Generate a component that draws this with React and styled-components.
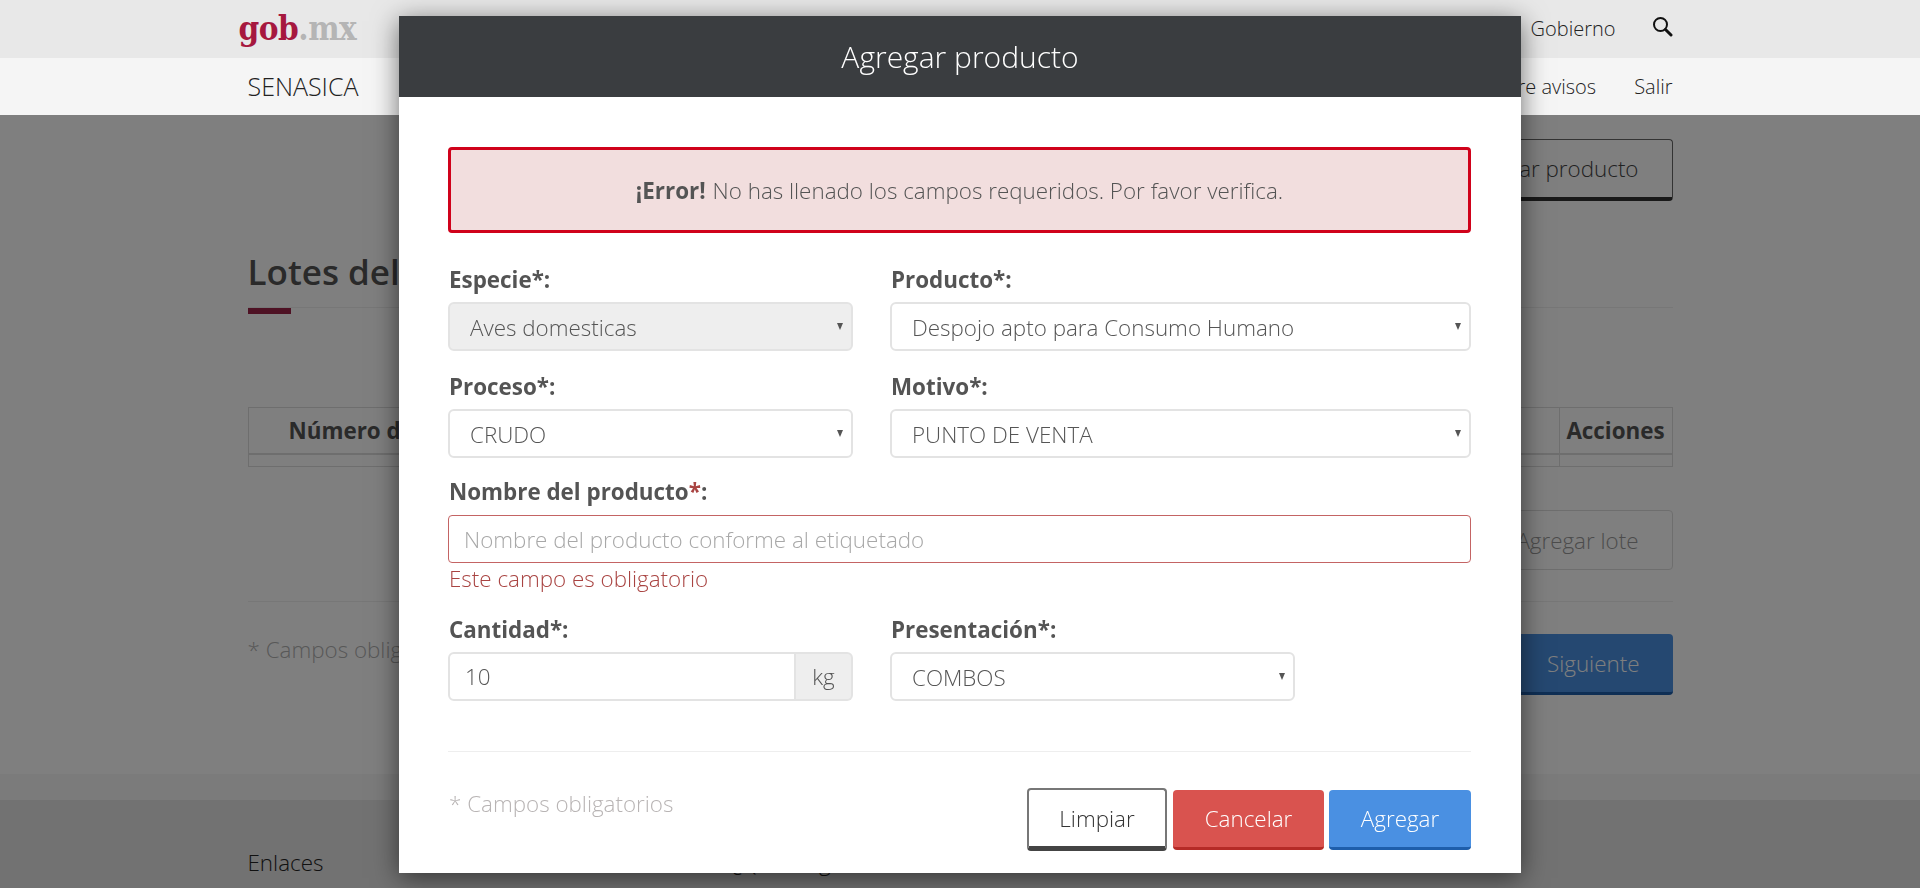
import React from 'react';
import styled, { createGlobalStyle } from 'styled-components';

const GlobalStyle = createGlobalStyle`
  html, body {
    margin: 0;
    height: 100%;
    overflow: hidden;
    background: #fff;
  }
  body {
    font-family: "Open Sans", "Noto Sans", sans-serif;
    font-weight: 300;
    color: #545454;
  }
  * {
    box-sizing: border-box;
  }
`;

const Wrap = styled.div`
  width: 1425px;
  margin: 0 auto;
`;

const TopBar = styled.div`
  position: relative;
  z-index: 20;
  height: 58px;
  background: #e8e8e8;
`;

const TopInner = styled(Wrap)`
  height: 100%;
  padding-bottom: 2px;
  display: flex;
  align-items: center;
  justify-content: space-between;
`;

const Logo = styled.div`
  margin-left: -9px;
  font-family: "DejaVu Serif Condensed", "DejaVu Serif", serif;
  font-weight: 700;
  font-size: 33px;
  letter-spacing: -0.5px;
  color: #a6183f;
  span {
    color: #b5b5b5;
  }
`;

const TopRight = styled.div`
  display: flex;
  align-items: center;
  gap: 36px;
  font-size: 20px;
  color: #222;
  svg {
    margin-top: -4px;
  }
`;

const NavBar = styled.div`
  position: relative;
  z-index: 20;
  height: 57px;
  background: #f5f5f5;
`;

const NavInner = styled(Wrap)`
  height: 100%;
  display: flex;
  align-items: center;
  justify-content: space-between;
  color: #222;
`;

const Brand = styled.div`
  margin-top: -2px;
  font-size: 25px;
`;

const NavLinks = styled.div`
  display: flex;
  gap: 38px;
  font-size: 20px;
`;

const Content = styled(Wrap)`
  height: 659px;
  padding-top: 24px;
`;

const PageActions = styled.div`
  display: flex;
  justify-content: flex-end;
`;

const OutlineButton = styled.button`
  height: 62px;
  padding: 0 33px;
  border: 1px solid #666;
  border-bottom: 4px solid #333;
  border-radius: 4px;
  background: #fff;
  font: inherit;
  font-size: 22.4px;
  color: #444;
`;

const SectionTitle = styled.h2`
  margin: 49px 0 0;
  height: 58px;
  border-bottom: 1px solid #eee;
  font-size: 35px;
  font-weight: 600;
  color: #545454;
  line-height: 44px;
`;

const TitleBar = styled.div`
  width: 43px;
  height: 6px;
  background: #9d2449;
`;

const Table = styled.table`
  width: 100%;
  margin-top: 93px;
  border-collapse: collapse;
  table-layout: fixed;
  th {
    height: 46px;
    border: 1px solid #ddd;
    border-bottom-width: 2px;
    font-size: 22.4px;
    font-weight: 700;
    color: #545454;
    text-align: left;
    padding: 0 0 0 40px;
  }
  th:last-child {
    width: 113px;
    padding: 0;
    text-align: center;
  }
  td {
    height: 13px;
    padding: 0;
    border: 1px solid #ddd;
  }
`;

const AddRow = styled.div`
  display: flex;
  justify-content: flex-end;
  margin-top: 43px;
`;

const GhostButton = styled.button`
  height: 60px;
  padding: 0 33px;
  border: 1px solid #ddd;
  border-radius: 4px;
  background: #fff;
  font: inherit;
  font-size: 22.4px;
  color: #999;
`;

const PageRule = styled.div`
  height: 1px;
  margin-top: 31px;
  background: #eee;
`;

const PageFoot = styled.div`
  display: flex;
  align-items: flex-start;
  justify-content: space-between;
  margin-top: 32px;
`;

const PageNote = styled.div`
  padding-top: 1px;
  font-size: 22.4px;
  line-height: 30px;
  color: #b0b0b0;
`;

const NextButton = styled.button`
  height: 61px;
  padding: 0 33px;
  border: 0;
  border-bottom: 3px solid #1e5eab;
  border-radius: 4px;
  background: #4a90e2;
  font: inherit;
  font-size: 22.4px;
  color: #fff;
`;

const PreFooter = styled.div`
  height: 26px;
  background: #f6f6f6;
`;

const Footer = styled.div`
  height: 88px;
  background: #e4e4e4;
`;

const FooterInner = styled(Wrap)`
  display: grid;
  grid-template-columns: 485px 1fr;
  padding-top: 48px;
  font-size: 22.4px;
  line-height: 30px;
  color: #222;
`;

const Backdrop = styled.div`
  position: fixed;
  inset: 0;
  z-index: 10;
  background: rgba(0, 0, 0, 0.5);
`;

const Modal = styled.div`
  position: fixed;
  z-index: 30;
  top: 16px;
  left: 399px;
  width: 1122px;
  height: 857px;
  background: #fff;
  box-shadow: 0 5px 25px rgba(0, 0, 0, 0.55);
`;

const ModalHeader = styled.div`
  height: 81px;
  display: flex;
  align-items: center;
  justify-content: center;
  background: #3a3d40;
  color: #fff;
  font-size: 30px;
`;

const ModalBody = styled.div`
  padding: 50px 50px 0 49px;
`;

const Alert = styled.div`
  height: 86px;
  display: flex;
  align-items: center;
  justify-content: center;
  gap: 7px;
  margin-bottom: 34px;
  border: 3px solid #d0021b;
  border-radius: 4px;
  background: #f2dede;
  font-size: 22.4px;
  color: #545454;
  strong {
    font-weight: 700;
  }
`;

const Row = styled.div`
  display: grid;
  grid-template-columns: 405px 1fr;
  column-gap: 37px;
  margin-top: ${({ $top }) => $top || 0}px;
  margin-bottom: ${({ $gap }) => $gap}px;
`;

const Field = styled.div`
  min-width: 0;
`;

const Label = styled.label`
  display: block;
  margin-bottom: 9px;
  padding-left: 1px;
  font-size: 22.4px;
  line-height: 26px;
  font-weight: 700;
  color: #545454;
  em {
    font-style: normal;
    color: #a94442;
  }
`;

const SelectBox = styled.div`
  position: relative;
  max-width: 405px;
  ${({ $wide }) => $wide && 'max-width: none;'}
  &::after {
    content: '';
    position: absolute;
    top: 21px;
    right: 10px;
    border-left: 3.5px solid transparent;
    border-right: 3.5px solid transparent;
    border-top: 7px solid #555;
  }
`;

const Select = styled.select`
  display: block;
  width: 100%;
  height: 49px;
  padding: 1px 30px 0 20px;
  appearance: none;
  border: 2px solid #e3e3e3;
  border-radius: 6px;
  background: ${({ disabled }) => (disabled ? '#eeeeee' : '#fff')};
  font: inherit;
  font-size: 22.4px;
  color: #555;
  opacity: 1;
`;

const TextInput = styled.input`
  display: block;
  width: 100%;
  height: 48px;
  margin-top: 10px;
  padding: 0 15px;
  border: 1px solid #c46464;
  border-radius: 4px;
  background: #fff;
  font: inherit;
  font-size: 22.4px;
  color: #555;
  &::placeholder {
    color: #a8a8a8;
  }
`;

const ErrorText = styled.div`
  margin-top: 2px;
  padding-left: 1px;
  font-size: 22.4px;
  line-height: 27px;
  color: #a94442;
`;

const InputGroup = styled.div`
  display: flex;
  height: 49px;
`;

const AmountInput = styled.input`
  flex: 1;
  min-width: 0;
  padding: 0 15px;
  border: 2px solid #e3e3e3;
  border-radius: 6px 0 0 6px;
  font: inherit;
  font-size: 22.4px;
  color: #555;
`;

const Addon = styled.div`
  width: 57px;
  display: flex;
  align-items: center;
  justify-content: center;
  border: 2px solid #e3e3e3;
  border-left: 0;
  border-radius: 0 6px 6px 0;
  background: #eee;
  font-size: 22.4px;
  color: #555;
`;

const Rule = styled.div`
  height: 1px;
  margin: 50px 0 0;
  background: #eee;
`;

const FormFoot = styled.div`
  display: flex;
  align-items: flex-start;
  justify-content: space-between;
  padding-top: 36px;
`;

const Note = styled.div`
  padding: 1px 0 0 1px;
  font-size: 22.4px;
  line-height: 30px;
  color: #b8b4b4;
`;

const Buttons = styled.div`
  display: flex;
  align-items: flex-start;
`;

const ClearButton = styled.button`
  width: 140px;
  height: 63px;
  margin-right: 6px;
  border: 2px solid #777;
  border-bottom: 5px solid #444;
  border-radius: 4px;
  background: #fff;
  font: inherit;
  font-size: 22.4px;
  color: #333;
`;

const ActionButton = styled.button`
  width: ${({ $w }) => $w}px;
  height: 60px;
  margin-top: 2px;
  margin-left: ${({ $ml }) => $ml}px;
  border: 0;
  border-bottom: 3px solid ${({ $edge }) => $edge};
  border-radius: 4px;
  background: ${({ $bg }) => $bg};
  font: inherit;
  font-size: 22.4px;
  color: #fff;
`;

const SearchIcon = () => (
  <svg width="21" height="21" viewBox="0 0 21 21" fill="none" stroke="#111">
    <circle cx="8.5" cy="8.5" r="6.5" strokeWidth="2" />
    <path d="M13.5 13.5L19 19" strokeWidth="3" strokeLinecap="round" />
  </svg>
);

export default function App() {
  return (
    <>
      <GlobalStyle />
      <TopBar>
        <TopInner>
          <Logo>
            gob<span>.mx</span>
          </Logo>
          <TopRight>
            <span>Gobierno</span>
            <SearchIcon />
          </TopRight>
        </TopInner>
      </TopBar>
      <NavBar>
        <NavInner>
          <Brand>SENASICA</Brand>
          <NavLinks>
            <span>Sobre avisos</span>
            <span>Salir</span>
          </NavLinks>
        </NavInner>
      </NavBar>

      <Content>
        <PageActions>
          <OutlineButton>Agregar producto</OutlineButton>
        </PageActions>
        <SectionTitle>Lotes del</SectionTitle>
        <TitleBar />
        <Table>
          <thead>
            <tr>
              <th>Número de lote</th>
              <th>Acciones</th>
            </tr>
          </thead>
          <tbody>
            <tr>
              <td />
              <td />
            </tr>
          </tbody>
        </Table>
        <AddRow>
          <GhostButton>Agregar lote</GhostButton>
        </AddRow>
        <PageRule />
        <PageFoot>
          <PageNote>* Campos obligatorios</PageNote>
          <NextButton>Siguiente</NextButton>
        </PageFoot>
      </Content>
      <PreFooter />
      <Footer>
        <FooterInner>
          <div>Enlaces</div>
          <div>¿Qué es gob.mx?</div>
        </FooterInner>
      </Footer>

      <Backdrop />
      <Modal>
        <ModalHeader>Agregar producto</ModalHeader>
        <ModalBody>
          <Alert>
            <strong>¡Error!</strong> No has llenado los campos requeridos. Por favor verifica.
          </Alert>
          <Row $gap={23}>
            <Field>
              <Label>Especie*:</Label>
              <SelectBox>
                <Select disabled defaultValue="aves">
                  <option value="aves">Aves domesticas</option>
                </Select>
              </SelectBox>
            </Field>
            <Field>
              <Label>Producto*:</Label>
              <SelectBox $wide>
                <Select defaultValue="despojo">
                  <option value="despojo">Despojo apto para Consumo Humano</option>
                </Select>
              </SelectBox>
            </Field>
          </Row>
          <Row $gap={21}>
            <Field>
              <Label>Proceso*:</Label>
              <SelectBox>
                <Select defaultValue="crudo">
                  <option value="crudo">CRUDO</option>
                </Select>
              </SelectBox>
            </Field>
            <Field>
              <Label>Motivo*:</Label>
              <SelectBox $wide>
                <Select defaultValue="venta">
                  <option value="venta">PUNTO DE VENTA</option>
                </Select>
              </SelectBox>
            </Field>
          </Row>
          <Field>
            <Label>
              Nombre del producto<em>*</em>:
            </Label>
            <TextInput placeholder="Nombre del producto conforme al etiquetado" />
            <ErrorText>Este campo es obligatorio</ErrorText>
          </Field>
          <Row $top={25} $gap={0}>
            <Field>
              <Label>Cantidad*:</Label>
              <InputGroup>
                <AmountInput defaultValue="10" />
                <Addon>kg</Addon>
              </InputGroup>
            </Field>
            <Field>
              <Label>Presentación*:</Label>
              <SelectBox>
                <Select defaultValue="combos">
                  <option value="combos">COMBOS</option>
                </Select>
              </SelectBox>
            </Field>
          </Row>
          <Rule />
          <FormFoot>
            <Note>* Campos obligatorios</Note>
            <Buttons>
              <ClearButton>Limpiar</ClearButton>
              <ActionButton $w={151} $bg="#d9534f" $edge="#b52b27">
                Cancelar
              </ActionButton>
              <ActionButton $w={142} $ml={5} $bg="#4a90e2" $edge="#1e5eab">
                Agregar
              </ActionButton>
            </Buttons>
          </FormFoot>
        </ModalBody>
      </Modal>
    </>
  );
}
